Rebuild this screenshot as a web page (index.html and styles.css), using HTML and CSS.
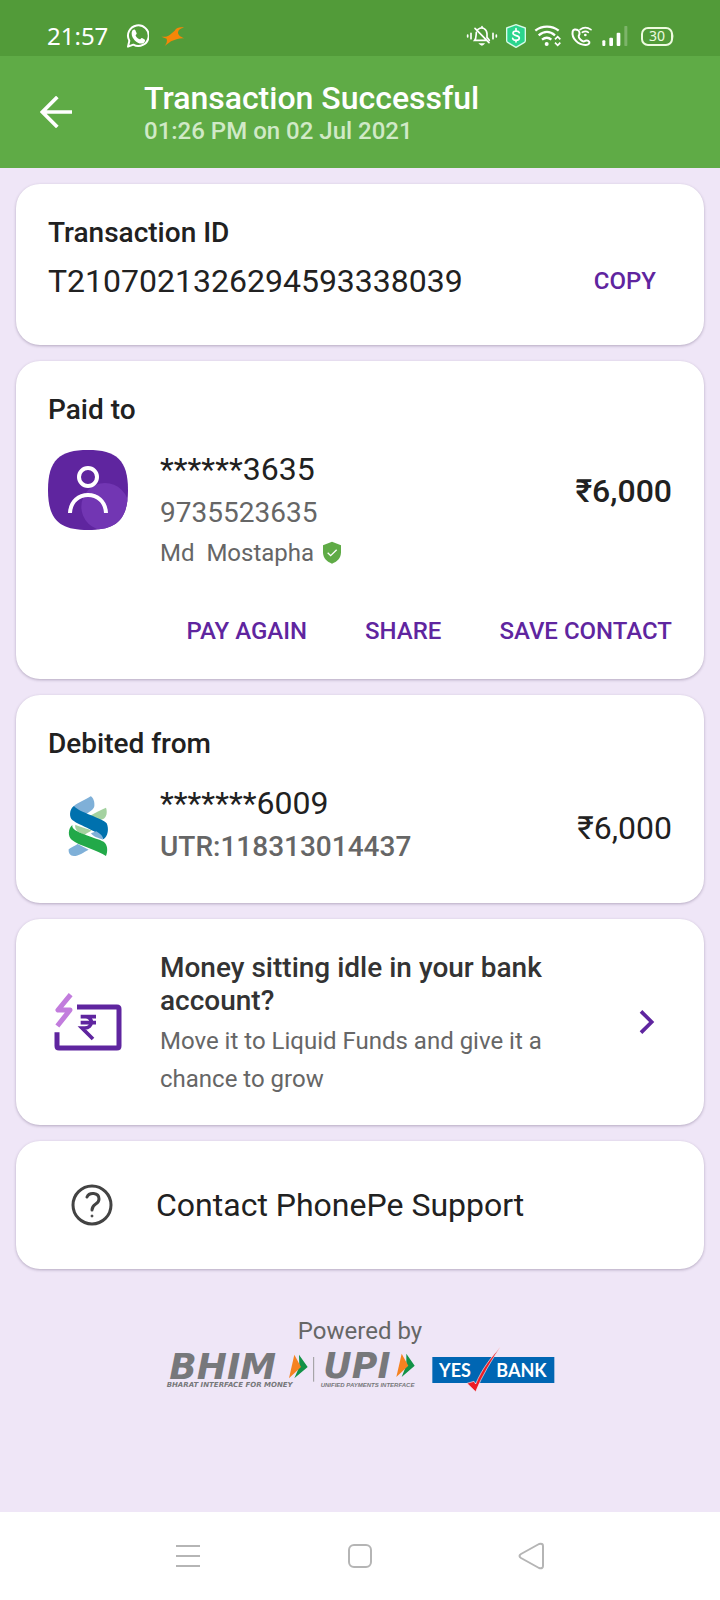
FILE: index.html
```html
<!DOCTYPE html>
<html lang="en">
<head>
<meta charset="utf-8">
<meta name="viewport" content="width=device-width, initial-scale=1">
<title>Transaction Successful</title>
<link rel="stylesheet" href="styles.css">
</head>
<body>
<div class="status">
  <span class="clock">21:57</span>
  <svg class="whatsapp" width="24" height="26" viewBox="378 69 72 78" fill="none" stroke="#fff" aria-hidden="true">
    <path stroke-width="6" stroke-linejoin="round" d="M387 140l4-18a31 31 0 1 1 12 12z"/>
    <path fill="#fff" stroke="none" d="M401 91c4-4 8-2 9 2l3 7c1 3-4 5-3 7 3 6 7 9 12 11 3 0 4-5 7-4l7 4c4 2 2 8-2 11-14 8-36-12-36-28 0-4 1-8 3-10z"/>
  </svg>
  <svg class="app-mark" width="24" height="22" viewBox="484 75 72 66" aria-hidden="true">
    <path fill="#f58608" d="M553 83c-10-3-22-1-28 9l-14 12c-8 6-16 7-26 6l16 6c2 8 0 14-6 22l19-14c12-5 24-10 40-9-12-4-20-11-19-18 1-8 8-13 18-14z"/>
  </svg>
  <div class="status-icons">
    <svg width="32" height="24" viewBox="78 72 96 72" fill="none" stroke="#fff" stroke-width="5" stroke-linecap="round" aria-hidden="true">
      <path d="M83 105v6M93 100v16M159 100v16M169 105v6M105 85l42 43M114 88c14-10 26 0 27 13v12M109 97c-1 10 0 18-5 24h34M142 113l6 8M126 80v3"/>
      <path d="M121 132q5 5 9 0z" fill="#fff"/>
    </svg>
    <svg width="20" height="24" viewBox="195 72 60 72" fill="none" stroke-linejoin="round" aria-hidden="true">
      <path fill="#2bd58d" stroke="#d8fbe9" stroke-width="4" d="M225 74l28 10v38q0 4-4 6l-24 14-24-14q-4-2-4-6V84z"/>
      <path stroke="#fff" stroke-width="5" stroke-linecap="round" d="M235 98c-2-6-19-7-19 2 0 9 19 5 19 14 0 9-18 9-20 1M225 86v6M225 120v6"/>
    </svg>
    <svg width="28" height="24" viewBox="284 72 84 72" fill="none" stroke="#fff" stroke-width="7" aria-hidden="true">
      <path d="M288 92c20-16 50-16 70 0M298 106c16-13 34-13 49 0M308 119c9-7 20-7 28 0"/>
      <circle cx="322" cy="132" r="6" fill="#fff" stroke="none"/>
      <path stroke-width="5" d="M347 118l8-8 8 8M347 128l8 8 8-8"/>
    </svg>
    <svg width="24" height="24" viewBox="390 72 72 72" fill="none" stroke="#fff" stroke-width="6" stroke-linecap="round" stroke-linejoin="round" aria-hidden="true">
      <path d="M398 94c-4 21 17 42 40 41 8 0 11-6 10-9-4-6-10-6-15-2-6 2-18-10-17-16 4-6 4-14-3-18-6-3-13-2-15 4z"/>
      <path stroke-width="5" d="M420 89c10-8 22-8 33 0M427 97c7-4 12-4 18 0"/>
      <circle cx="436" cy="105" r="4" fill="#fff" stroke="none"/>
    </svg>
    <svg class="signal" width="26" height="24" viewBox="488 72 78 72" fill="#fff" aria-hidden="true">
      <rect x="489" y="121" width="9" height="17" rx="3"/><rect x="510" y="113" width="11" height="25" rx="3"/><rect x="532" y="98" width="11" height="40" rx="3"/><rect x="555" y="78" width="9" height="60" rx="2" opacity=".25"/>
    </svg>
    <svg class="battery" width="36" height="24" viewBox="0 0 36 24" aria-label="Battery 30 percent">
      <rect x="2" y="4" width="30" height="17" rx="6" fill="none" stroke="#eefbe0" stroke-width="2"/>
      <path fill="#eefbe0" d="M32 8q3 4 0 9z"/>
      <text x="17" y="17" text-anchor="middle" font-size="14" fill="#eefbe0">30</text>
    </svg>
  </div>
</div>

<header class="header">
  <button class="back" aria-label="Back">
    <svg width="32" height="32" viewBox="120 288 96 96" fill="none" stroke="#fff" stroke-width="11" aria-hidden="true"><path d="M216 336H128M172 291l-45 45 45 45"/></svg>
  </button>
  <div>
    <h1 class="title">Transaction Successful</h1>
    <p class="date">01:26 PM on 02 Jul 2021</p>
  </div>
</header>

<main class="main">
  <section class="card">
    <h2 class="heading">Transaction ID</h2>
    <div class="id-row">
      <span class="large">T2107021326294593338039</span>
      <button class="action copy">COPY</button>
    </div>
  </section>

  <section class="card paid">
    <h2 class="heading">Paid to</h2>
    <div class="entry">
      <svg class="icon" viewBox="144 270 240 240" fill="none" aria-hidden="true">
        <defs><clipPath id="tile"><path d="M264 270c85 0 120 30 120 120s-35 120-120 120-120-30-120-120 35-120 120-120z"/></clipPath></defs>
        <g clip-path="url(#tile)"><path fill="#5f259f" d="M144 270h240v240H144z"/><circle cx="315" cy="440" r="71" fill="#7236b3"/></g>
        <g stroke="#fff" stroke-width="12"><circle cx="264" cy="351" r="27"/><path d="M210 459c3-72 105-72 108 0"/></g>
      </svg>
      <div class="details">
        <p class="large">******3635</p>
        <p class="medium">9735523635</p>
        <p class="small name">Md&nbsp; Mostapha
          <svg width="20" height="24" viewBox="966 541 60 72" aria-label="Verified"><path fill="#5fab46" d="M996 543l27 11v21c0 17-12 29-27 34-15-5-27-17-27-34v-21z"/><path fill="none" stroke="#fff" stroke-width="4" d="M983 576l9 9 18-18"/></svg>
        </p>
      </div>
      <span class="amount strong">₹6,000</span>
    </div>
    <div class="actions">
      <button class="action">PAY AGAIN</button>
      <button class="action">SHARE</button>
      <button class="action">SAVE CONTACT</button>
    </div>
  </section>

  <section class="card">
    <h2 class="heading">Debited from</h2>
    <div class="entry debit">
      <svg class="icon" viewBox="144 288 240 240" aria-hidden="true">
        <path fill="#7fb0d8" d="M220 350c12-13 37-20 52-31 8 3 13 18 11 30-2 12-23 22-40 33l-28-6z"/>
        <path fill="#a4d2a0" d="M318 353c5 14 1 28-7 33l-15 6-27-14c16-10 34-19 49-25z"/>
        <path fill="#0071ae" d="M222 348c-14 9-16 34-4 43 22 17 81 34 92 57 15-8 17-33 10-48-13-16-84-33-98-52z"/>
        <path fill="#a4d2a0" d="M226 404c17 8 39 13 48 17-6 8-16 8-19 14-15-5-33-14-29-31z"/>
        <path fill="#7fb0d8" d="M273 430l16-6c11 8 20 12 20 25-13-5-29-8-36-19z"/>
        <path fill="#7fb0d8" d="M233 462l33 17c-15 8-31 19-44 19-12 0-17-8-16-20 7-6 17-9 27-16z"/>
        <path fill="#22a949" d="M217 405c-13 11-14 34-2 44 22 19 80 31 103 49 6-17 5-33-7-43-22-12-100-28-94-50z"/>
      </svg>
      <div class="details">
        <p class="large">*******6009</p>
        <p class="medium utr">UTR:118313014437</p>
      </div>
      <span class="amount">₹6,000</span>
    </div>
  </section>

  <a class="card promo" href="#">
    <svg class="icon" viewBox="144 213 240 240" fill="none" stroke="#5f259f" aria-hidden="true">
      <path stroke-width="15" d="M231 288h120q6 0 6 6v111q0 6-6 6H177q-6 0-6-6v-41"/>
      <path stroke="#c27cdd" stroke-width="15" stroke-linejoin="round" d="M212 251l-38 46h36l-38 48"/>
      <path stroke-width="11" d="M242 317h46M242 335h46M256 317c24 0 24 34-2 34h-8l33 33"/>
    </svg>
    <span class="promo-text">
      <strong class="promo-title">Money sitting idle in your bank account?</strong>
      <span class="promo-sub">Move it to Liquid Funds and give it a chance to grow</span>
    </span>
    <svg class="chevron" width="16" height="24" viewBox="839 300 48 72" fill="none" stroke="#5f259f" stroke-width="11" aria-hidden="true"><path d="M845 304l32 32-32 32"/></svg>
  </a>

  <a class="card support" href="#">
    <svg width="42" height="42" viewBox="0 0 42 42" fill="none" stroke="#434343" stroke-width="3" aria-hidden="true"><circle cx="21" cy="21" r="19"/><path stroke-linecap="round" d="M16 13c2-5 12-5 12 2 0 6-7 4-7 11"/><circle cx="21" cy="32" r="1" stroke-width="1" fill="#434343"/></svg>
    <span class="large">Contact PhonePe Support</span>
  </a>

  <footer class="powered">
    <p class="small">Powered by</p>
    <div class="logos">
      <svg class="bhim" width="250" height="45" viewBox="50 140 750 135" role="img" aria-label="BHIM UPI">
        <g class="wordmark" fill="#77787b"><text x="60" y="235" font-size="108">BHIM</text><text x="522" y="232" font-size="105">UPI</text></g>
        <path fill="#129247" d="M449 163l26 37-40 34 15-35z"/><path fill="#f58220" d="M435 163l20 37-36 34z"/>
        <path fill="#129247" d="M771 160l25 36-39 34 14-35z"/><path fill="#f58220" d="M757 160l20 36-36 34z"/>
        <path stroke="#999" stroke-width="3" d="M493 170v74"/>
        <g class="tagline" fill="#77787b"><text class="wide" x="52" y="261" font-size="21">BHARAT INTERFACE FOR MONEY</text><text x="514" y="260" font-size="18">UNIFIED PAYMENTS INTERFACE</text></g>
      </svg>
      <svg width="123" height="45" viewBox="845 140 369 135" role="img" aria-label="YES BANK">
        <path fill="#0066b3" d="M846 170h366v78H846z"/>
        <g class="yes" fill="#fff" font-size="54"><text x="866" y="229">YES</text><text x="1038" y="229">BANK</text></g>
        <path fill="#ed1c24" stroke="#f4e8f3" stroke-width="2" d="M1050 140c-26 40-54 84-74 134l-26-25 21-6 5 8c20-48 47-80 74-111z"/>
      </svg>
    </div>
  </footer>
</main>

<nav class="nav">
  <button aria-label="Recent apps"><svg width="28" height="28" viewBox="0 0 28 28" stroke="#b5b5b5" stroke-width="2"><path d="M2 4h24M2 14h24M2 24h24"/></svg></button>
  <button aria-label="Home"><svg width="28" height="28" viewBox="0 0 28 28" fill="none" stroke="#b5b5b5" stroke-width="2"><rect x="3" y="3" width="22" height="22" rx="5"/></svg></button>
  <button aria-label="Back"><svg width="28" height="28" viewBox="0 0 28 28" fill="none" stroke="#b5b5b5" stroke-width="2" stroke-linejoin="round"><path d="M3 12L21 2q4-1 4 2v20q0 3-4 2L3 16q-3-2 0-4z"/></svg></button>
</nav>
</body>
</html>
```
FILE: styles.css
```css
* { box-sizing: border-box; }

body {
  margin: 0;
  min-height: 100vh;
  display: flex;
  flex-direction: column;
  background: #efe6f7;
  color: #212121;
  font-family: Roboto, "Noto Sans", sans-serif;
}

h1, h2, p { margin: 0; font-weight: 500; }
svg { display: block; flex: none; }
a { color: inherit; text-decoration: none; }
button { margin: 0; padding: 0; border: 0; background: none; font: inherit; color: inherit; cursor: pointer; }

.status {
  height: 56px;
  padding: 16px 44px 0 47px;
  display: flex;
  align-items: center;
  background: #529b39;
  color: #fff;
}
.clock { font: 24px/32px "Noto Sans", sans-serif; }
.whatsapp { margin-left: 17px; }
.app-mark { margin-left: 12px; }
.status-icons { margin-left: auto; display: flex; align-items: center; gap: 8px; }
.battery { margin-left: 4px; font-family: "Noto Sans", sans-serif; }

.header {
  height: 112px;
  padding: 0 40px;
  display: flex;
  align-items: center;
  gap: 72px;
  background: #5fab46;
  color: #fff;
}
.title { font-size: 32px; line-height: 38px; }
.date { font-size: 24px; line-height: 28px; color: #d0e9c7; }

.main {
  flex: 1;
  padding: 16px;
  display: flex;
  flex-direction: column;
  gap: 16px;
}
.card {
  padding: 32px;
  border-radius: 24px;
  background: #fff;
  box-shadow: 0 1px 3px rgba(60, 40, 80, .32);
}
.heading { font-size: 28px; line-height: 33px; }
.large { font-size: 32px; line-height: 38px; font-weight: 400; }
.medium { font-size: 28px; line-height: 33px; font-weight: 400; color: #666; }
.small { font-size: 24px; line-height: 28px; font-weight: 400; color: #666; }
.utr { font-weight: 500; }

.id-row { height: 64px; display: flex; align-items: center; justify-content: space-between; }
.action { font-size: 24px; line-height: 28px; font-weight: 500; color: #5f259f; }
.copy { padding: 16px; }

.entry { margin-top: 24px; display: flex; gap: 32px; }
.icon { width: 80px; height: 80px; }
.details { flex: 1; display: flex; flex-direction: column; gap: 8px; }
.name { line-height: 32px; display: flex; align-items: center; gap: 8px; }
.amount { height: 80px; font-size: 32px; line-height: 82px; }
.strong { font-weight: 500; }
.debit { height: 87px; }
.debit .icon { margin-top: 2px; }
.debit .amount { line-height: 88px; }

.paid { padding-bottom: 18px; }
.actions { margin-top: 32px; display: flex; justify-content: flex-end; gap: 58px; }
.actions .action { padding: 16px 0; }

.promo { padding-bottom: 27px; display: flex; align-items: center; gap: 32px; }
.promo .icon, .chevron { margin-bottom: 6px; }
.promo-text { flex: 1; display: flex; flex-direction: column; gap: 5px; }
.promo-title { font-size: 28px; line-height: 33px; font-weight: 500; color: #333; }
.promo-sub { font-size: 24px; line-height: 38px; color: #666; }
.chevron { margin-left: 32px; margin-right: 17px; }

.support { padding: 43px 32px 43px 55px; display: flex; align-items: center; gap: 43px; }

.powered { margin-top: 32px; display: flex; flex-direction: column; align-items: center; gap: 2px; }
.logos { display: flex; gap: 16px; }
.bhim { overflow: visible; }
.wordmark { font-family: "DejaVu Sans", sans-serif; font-weight: 700; font-style: italic; }
.tagline { font-family: "Liberation Sans", sans-serif; font-weight: 700; font-style: italic; }
.wide { font-family: "DejaVu Sans", sans-serif; }
.yes { font-family: Lato, sans-serif; font-weight: 700; }

.nav {
  height: 88px;
  padding: 0 102px;
  display: flex;
  background: #fff;
}
.nav button { flex: 1; display: flex; align-items: center; justify-content: center; }
```
